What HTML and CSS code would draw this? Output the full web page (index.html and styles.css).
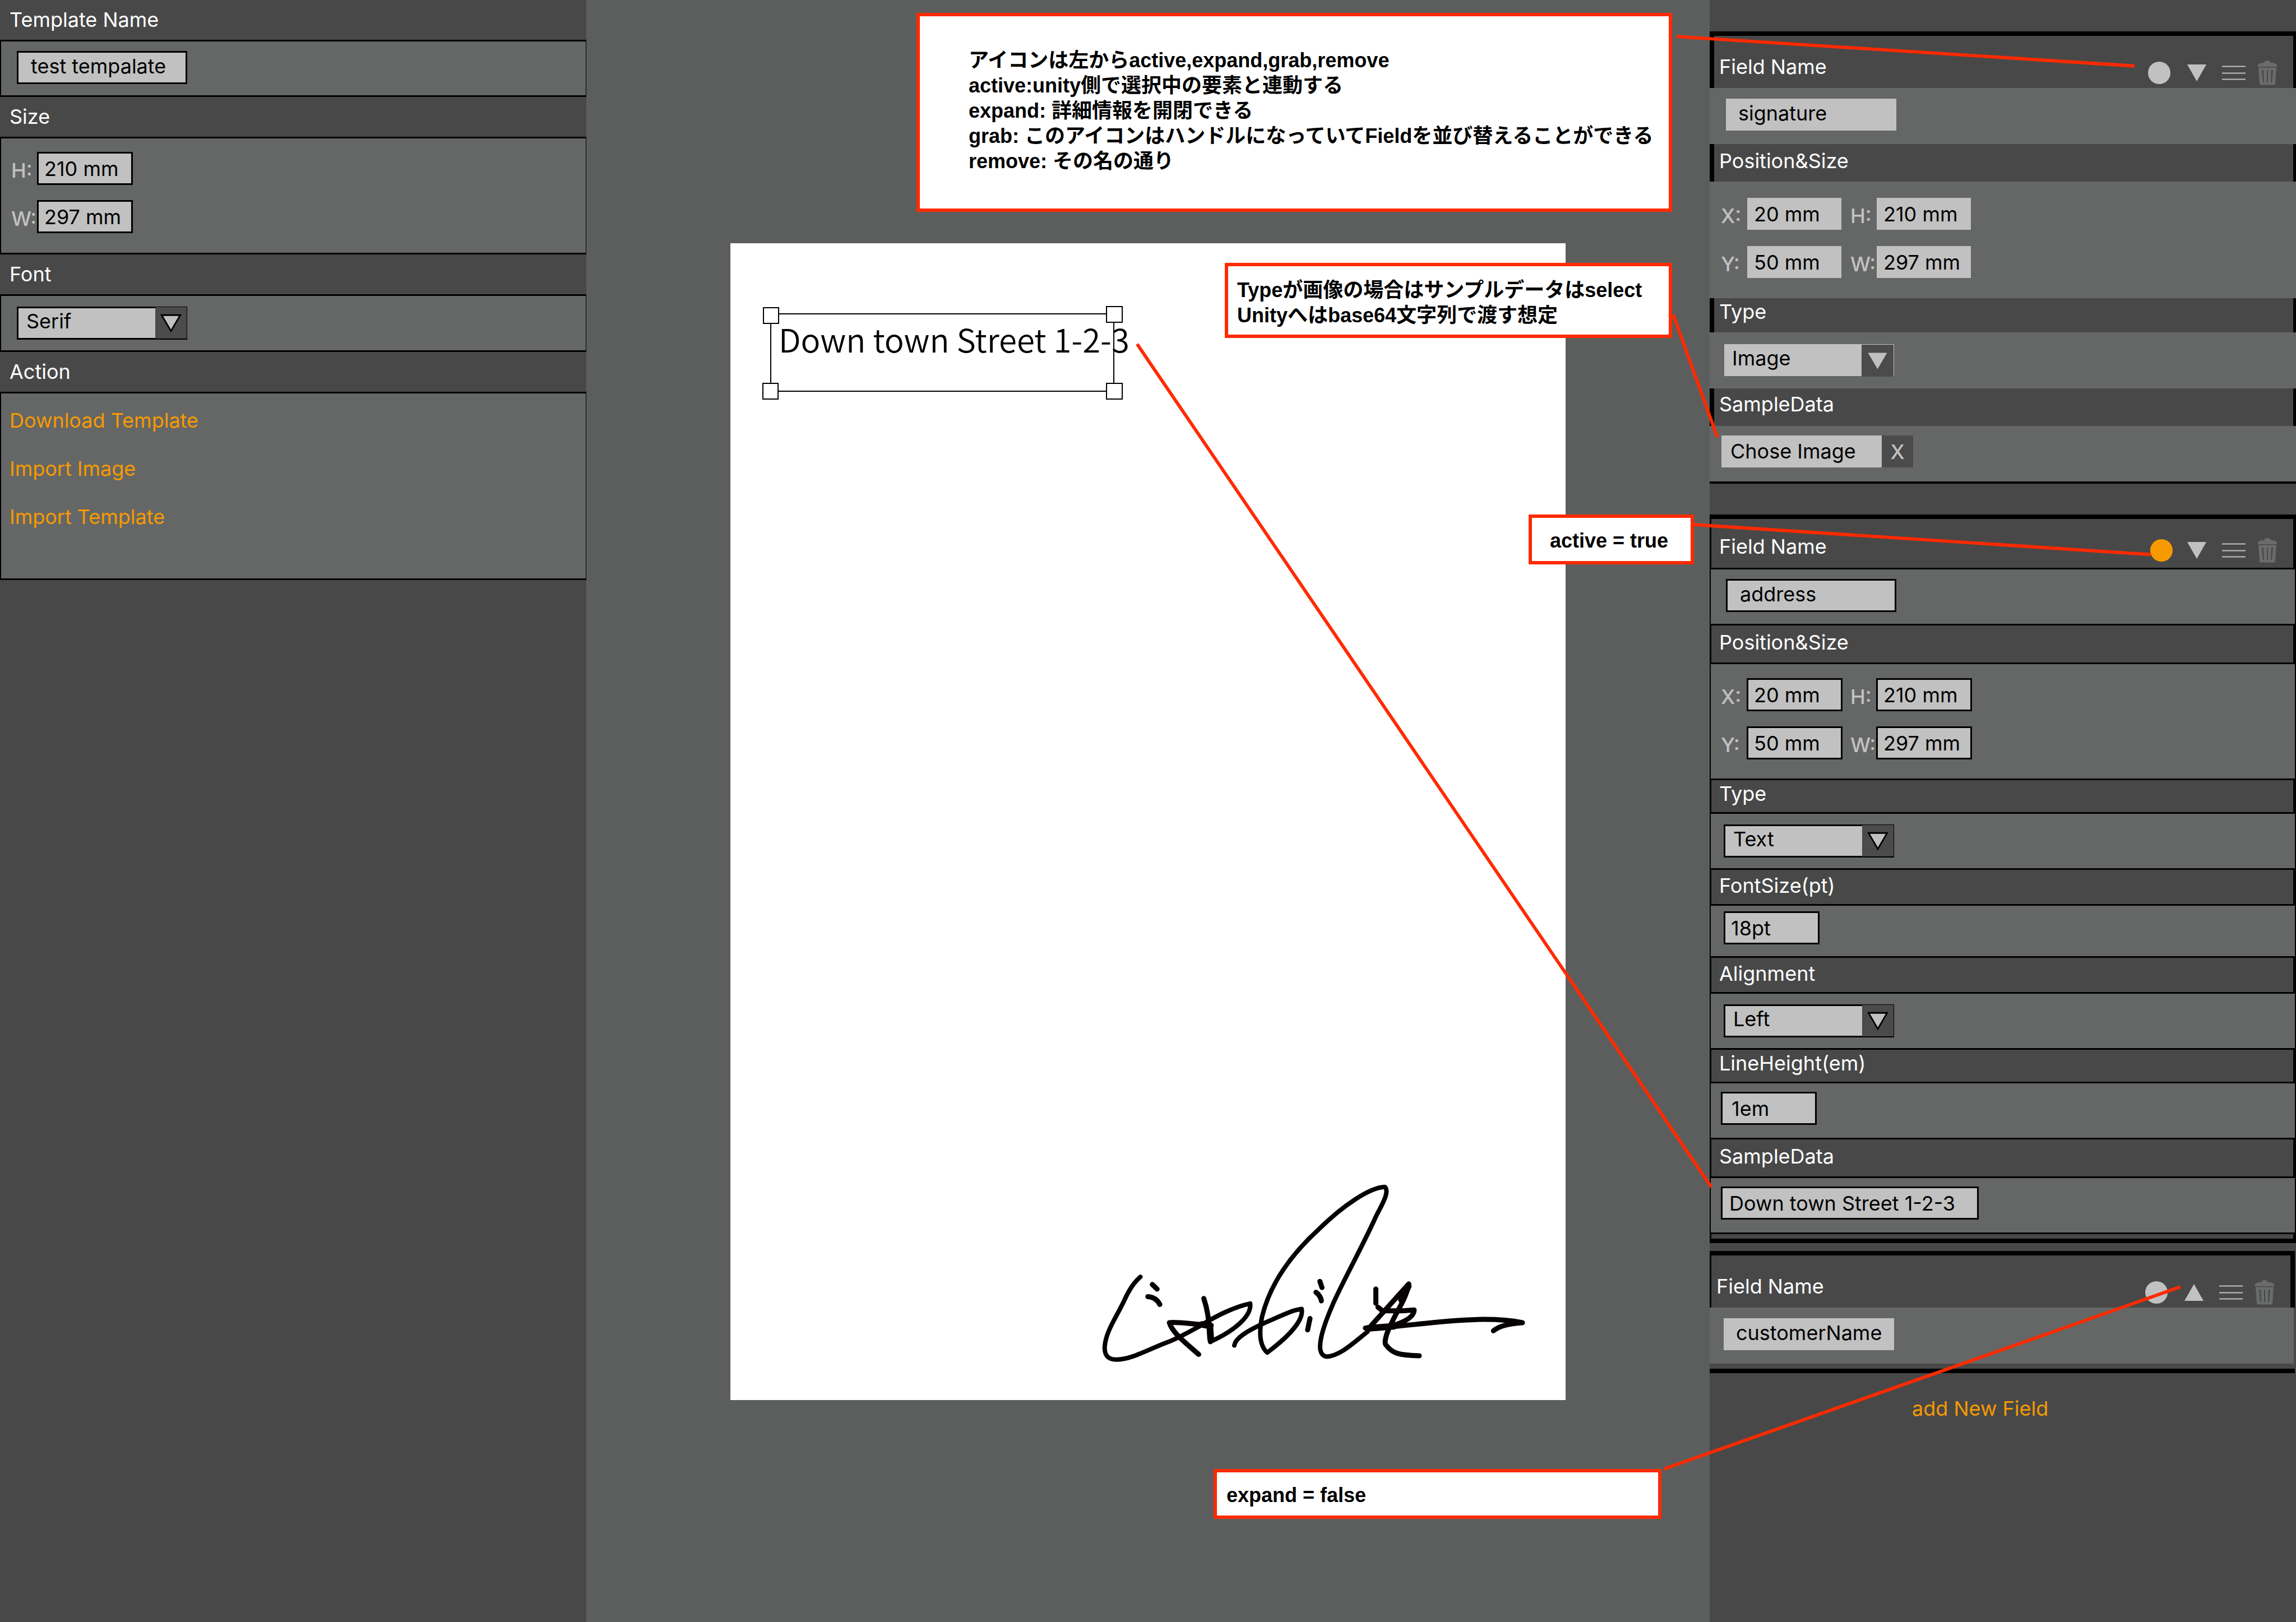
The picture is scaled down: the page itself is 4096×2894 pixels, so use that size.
FILE: index.html
```html
<!DOCTYPE html>
<html lang="ja">
<head>
<meta charset="utf-8">
<title>Template Editor</title>
<link rel="stylesheet" href="styles.css">
</head>
<body>
<svg class="symbols" aria-hidden="true">
  <symbol id="icon-dot" viewBox="0 0 64 44"><circle cx="30" cy="22" r="20"/></symbol>
  <symbol id="icon-dot-active" viewBox="0 0 64 44"><circle cx="34" cy="22" r="20"/></symbol>
  <symbol id="icon-down" viewBox="0 0 64 44"><path d="M16 7H50L33 37Z"/></symbol>
  <symbol id="icon-up" viewBox="0 0 64 44"><path d="M16 37H50L33 7Z"/></symbol>
  <symbol id="icon-grab" viewBox="0 0 64 44"><path d="M14 9.500H56V11.500H14ZM14 21.500H56V23.500H14ZM14 32.500H56V34.500H14Z"/></symbol>
  <symbol id="icon-trash" viewBox="0 0 64 44"><path fill-rule="evenodd" d="M14 11V8Q15 5 21 4H25Q26 0 31 0T37 4H41Q47 5 48 8V11ZM15 12.500H47L45 41Q45 43.500 42 43.500H20Q17 43.500 17 41ZM21 17L23 39H25L24 17ZM30 17V39H32V17ZM38 17L37 39H39L41 17Z"/></symbol>
  <symbol id="icon-caret" viewBox="0 0 57 59"><path d="M11 15H46L28.500 45Z"/></symbol>
</svg>

<main class="editor">
  <aside class="sidebar">
    <section class="group">
      <h2 class="group-title"><label for="template-name">Template Name</label></h2>
      <div class="group-body name-body">
        <input class="field field-name" id="template-name" type="text" value="test tempalate">
      </div>
    </section>
    <section class="group">
      <h2 class="group-title">Size</h2>
      <div class="group-body measure-body">
        <div class="measures">
          <label for="page-h">H:</label><input class="field measure" id="page-h" type="text" value="210 mm">
          <label for="page-w">W:</label><input class="field measure" id="page-w" type="text" value="297 mm">
        </div>
      </div>
    </section>
    <section class="group">
      <h2 class="group-title"><label for="font">Font</label></h2>
      <div class="group-body select-body">
        <div class="select"><select class="field" id="font"><option>Serif</option></select><svg class="caret"><use href="#icon-caret"/></svg></div>
      </div>
    </section>
    <section class="group">
      <h2 class="group-title">Action</h2>
      <div class="group-body actions">
        <a href="#download">Download Template</a>
        <a href="#import-image">Import Image</a>
        <a href="#import-template">Import Template</a>
      </div>
    </section>
  </aside>

  <section class="stage">
    <div class="paper">
      <p class="paper-text">Down town Street 1-2-3</p>
      <svg class="selection" viewBox="0 0 644 168" aria-hidden="true">
        <path d="M15 14H627V152H15Z"/>
        <path class="handle" d="M2 3H29V31H2ZM614 1H642V29H614ZM1 138H28V166H1ZM614 138H642V166H614Z"/>
      </svg>
      <svg class="signature" viewBox="0 0 1568 1200" preserveAspectRatio="none" role="img" aria-label="signature">
        <path d="M203 633C180 665 165 705 150 760C125 850 88 930 84 1015C82 1065 95 1090 125 1088C170 1088 220 1040 290 995C330 970 350 950 400 905"/>
        <path d="M400 905C450 855 510 800 570 780C575 840 530 920 437 990"/>
        <path d="M517 1010C520 970 560 930 620 885C670 850 710 815 742 810C750 870 700 960 627 1050C600 1010 600 930 610 850C640 650 720 490 800 370C880 240 970 140 1020 138C1040 170 1000 260 985 320C940 480 880 660 850 770C815 900 780 1060 825 1072C870 1070 920 990 962 935"/>
        <path class="bold" d="M300 885C330 880 370 892 440 900M300 885C310 940 350 990 398 1060M415 752C425 800 432 850 437 990M975 900L1100 672C1090 760 1060 820 1045 880C1025 940 1015 1000 1025 1010C1045 1055 1070 1065 1135 1067"/>
        <path class="bold" d="M955 915C1060 915 1200 870 1350 867C1400 867 1450 875 1480 885C1430 890 1400 905 1383 930M990 700V778M997 800L1012 820H1080L1118 815C1118 850 1090 880 1040 905"/>
        <path class="bold" d="M243 675L259 700M228 742C250 745 262 765 268 785M770 862L762 925M803 658L810 692M790 718C800 730 806 745 808 765"/>
        <path class="heavy" d="M410 895L436 903M435 900L438 975M965 916L1050 905M1076 760L1098 685"/>
      </svg>
    </div>
  </section>

  <aside class="sidebar fields">
    <article class="card card-plain">
      <section>
        <header class="card-head">
          <h2><label for="f1-name">Field Name</label></h2>
          <div class="tools">
            <button type="button" aria-label="active"><svg><use href="#icon-dot"/></svg></button>
            <button type="button" aria-label="expand"><svg><use href="#icon-down"/></svg></button>
            <button type="button" aria-label="grab"><svg><use href="#icon-grab"/></svg></button>
            <button type="button" aria-label="remove" class="remove"><svg><use href="#icon-trash"/></svg></button>
          </div>
        </header>
        <div class="prop-body name-body"><input class="field field-name" id="f1-name" type="text" value="signature"></div>
      </section>
      <section>
        <h3 class="prop-title roomy">Position&amp;Size</h3>
        <div class="prop-body measure-body">
          <div class="measures pairs">
            <label for="f1-x">X:</label><input class="field measure" id="f1-x" type="text" value="20 mm">
            <label for="f1-h">H:</label><input class="field measure" id="f1-h" type="text" value="210 mm">
            <label for="f1-y">Y:</label><input class="field measure" id="f1-y" type="text" value="50 mm">
            <label for="f1-w">W:</label><input class="field measure" id="f1-w" type="text" value="297 mm">
          </div>
        </div>
      </section>
      <section>
        <h3 class="prop-title tight"><label for="f1-type">Type</label></h3>
        <div class="prop-body select-body">
          <div class="select"><select class="field" id="f1-type"><option>Image</option></select><svg class="caret"><use href="#icon-caret"/></svg></div>
        </div>
      </section>
      <section>
        <h3 class="prop-title">SampleData</h3>
        <div class="prop-body sample-body">
          <button type="button" class="field choose">Chose Image</button><button type="button" class="clear">X</button>
        </div>
      </section>
    </article>

    <article class="card card-active">
      <section>
        <header class="card-head">
          <h2><label for="f2-name">Field Name</label></h2>
          <div class="tools">
            <button type="button" aria-label="active" class="is-active"><svg><use href="#icon-dot-active"/></svg></button>
            <button type="button" aria-label="expand"><svg><use href="#icon-down"/></svg></button>
            <button type="button" aria-label="grab"><svg><use href="#icon-grab"/></svg></button>
            <button type="button" aria-label="remove" class="remove"><svg><use href="#icon-trash"/></svg></button>
          </div>
        </header>
        <div class="prop-body name-body"><input class="field field-name" id="f2-name" type="text" value="address"></div>
      </section>
      <section>
        <h3 class="prop-title roomy">Position&amp;Size</h3>
        <div class="prop-body measure-body">
          <div class="measures pairs">
            <label for="f2-x">X:</label><input class="field measure" id="f2-x" type="text" value="20 mm">
            <label for="f2-h">H:</label><input class="field measure" id="f2-h" type="text" value="210 mm">
            <label for="f2-y">Y:</label><input class="field measure" id="f2-y" type="text" value="50 mm">
            <label for="f2-w">W:</label><input class="field measure" id="f2-w" type="text" value="297 mm">
          </div>
        </div>
      </section>
      <section>
        <h3 class="prop-title tight"><label for="f2-type">Type</label></h3>
        <div class="prop-body select-body">
          <div class="select"><select class="field" id="f2-type"><option>Text</option></select><svg class="caret"><use href="#icon-caret"/></svg></div>
        </div>
      </section>
      <section>
        <h3 class="prop-title"><label for="f2-size">FontSize(pt)</label></h3>
        <div class="prop-body size-body"><input class="field measure" id="f2-size" type="text" value="18pt"></div>
      </section>
      <section>
        <h3 class="prop-title"><label for="f2-align">Alignment</label></h3>
        <div class="prop-body select-body">
          <div class="select"><select class="field" id="f2-align"><option>Left</option></select><svg class="caret"><use href="#icon-caret"/></svg></div>
        </div>
      </section>
      <section>
        <h3 class="prop-title tight"><label for="f2-line">LineHeight(em)</label></h3>
        <div class="prop-body sample-body"><input class="field measure measure-line" id="f2-line" type="text" value="1em"></div>
      </section>
      <section>
        <h3 class="prop-title roomy"><label for="f2-sample">SampleData</label></h3>
        <div class="prop-body sample-body"><input class="field sample" id="f2-sample" type="text" value="Down town Street 1-2-3"></div>
      </section>
    </article>

    <article class="card card-plain card-closed">
      <section>
        <header class="card-head">
          <h2><label for="f3-name">Field Name</label></h2>
          <div class="tools">
            <button type="button" aria-label="active"><svg><use href="#icon-dot"/></svg></button>
            <button type="button" aria-label="expand"><svg><use href="#icon-up"/></svg></button>
            <button type="button" aria-label="grab"><svg><use href="#icon-grab"/></svg></button>
            <button type="button" aria-label="remove" class="remove"><svg><use href="#icon-trash"/></svg></button>
          </div>
        </header>
        <div class="prop-body name-body"><input class="field field-name" id="f3-name" type="text" value="customerName"></div>
      </section>
    </article>

    <button type="button" class="add">add New Field</button>
  </aside>

  <div class="notes">
    <p class="note note-icons">アイコンは左からactive,expand,grab,remove<br>active:unity側で選択中の要素と連動する<br>expand: 詳細情報を開閉できる<br>grab: このアイコンはハンドルになっていてFieldを並び替えることができる<br>remove: その名の通り</p>
    <p class="note note-type">Typeが画像の場合はサンプルデータはselect<br>Unityへはbase64文字列で渡す想定</p>
    <p class="note note-active">active = true</p>
    <p class="note note-expand">expand = false</p>
    <svg class="leaders" viewBox="0 0 4210 2975" aria-hidden="true">
      <path d="M3074 67L3914 121M3068 577L3149 802M3104 962L3944 1017M2085 631L3138 2177M3051 2694L3998 2360"/>
    </svg>
  </div>
</main>
</body>
</html>
```
FILE: styles.css
```css
:root {
  --chrome: #484848;
  --panel: #656766;
  --stage: #5c5e5d;
  --control: #c1c1c1;
  --control-dark: #4b4b4b;
  --accent: #f79a00;
  --note: #ff2a00;
}

* {
  box-sizing: border-box;
}

body {
  margin: 0;
  color: #fff;
  background: var(--stage);
  font: 400 36px/40px Inter, "Liberation Sans", "Noto Sans CJK JP", sans-serif;
}

h2,
h3,
p {
  margin: 0;
  font: inherit;
}

button {
  padding: 0;
  border: 0;
  background: none;
  color: inherit;
  font: inherit;
}

.symbols {
  position: absolute;
  width: 0;
  height: 0;
}

.editor {
  position: relative;
  display: grid;
  grid-template-columns: 1046px 1fr 1046px;
  min-height: 100vh;
}

.sidebar {
  background: var(--chrome);
}

/* Template settings */

.group-title {
  min-height: 71px;
  padding: 15px 17px 0;
}

.group-body {
  border: solid #000;
  border-width: 3px 1px 3px 2px;
  background: var(--panel);
}

.actions {
  display: flex;
  flex-direction: column;
  align-items: flex-start;
  padding: 5px 15px 67px;
}

.actions a {
  color: var(--accent);
  line-height: 86px;
  text-decoration: none;
}

/* Controls */

.field {
  display: block;
  margin: 0;
  padding: 0 14px 6px;
  border: 3px solid #000;
  border-radius: 0;
  background: var(--control);
  color: #000;
  font: inherit;
  line-height: 47px;
  height: 59px;
}

.field-name {
  width: 304px;
  padding-left: 22px;
}

.measure {
  width: 171px;
  padding: 3px 0 3px 10px;
}

.measure-line {
  padding-left: 16px;
}

.sample {
  width: 460px;
  padding: 3px 12px;
}

.measures {
  display: grid;
  grid-template-columns: 46px 171px;
  row-gap: 27px;
}

.pairs {
  grid-template-columns: 46px 185px 46px 171px;
}

.measures label {
  padding-top: 13px;
  color: var(--control);
  font-weight: 500;
}

.select {
  position: relative;
  width: 304px;
}

.select select {
  width: 100%;
  appearance: none;
}

.caret {
  position: absolute;
  top: 0;
  right: 0;
  width: 57px;
  height: 59px;
  border: solid #000;
  border-width: 1px 1px 2px 0;
  background: var(--control-dark);
  fill: var(--control);
  stroke: #000;
  stroke-width: 3px;
  pointer-events: none;
}

.name-body {
  padding: 17px 28px 20px;
}

.measure-body {
  padding: 24px 20px 35px 18px;
}

.select-body {
  padding: 19px 28px;
}

/* Stage */

.stage {
  padding: 434px 0 396px;
}

.paper {
  position: relative;
  width: 1490px;
  height: 2064px;
  margin: 0 auto;
  background: #fff;
}

.paper-text {
  position: absolute;
  left: 86px;
  top: 130px;
  color: #000;
  font: 350 58px/80px "Noto Sans CJK JP", sans-serif;
  white-space: nowrap;
}

.selection {
  position: absolute;
  left: 57px;
  top: 112px;
  width: 644px;
  height: 168px;
  fill: none;
  stroke: #000;
  stroke-width: 2px;
}

.selection .handle {
  fill: #fff;
}

.signature {
  position: absolute;
  left: 623px;
  top: 1639px;
  width: 837px;
  height: 389px;
  fill: none;
  stroke: #060203;
  stroke-linecap: round;
  stroke-linejoin: round;
}

.signature path {
  stroke-width: 8px;
  vector-effect: non-scaling-stroke;
}

.signature .bold {
  stroke-width: 9px;
}

.signature .heavy {
  stroke-width: 12px;
}

/* Field cards */

.fields {
  padding-top: 56px;
}

.card {
  border-top: 8px solid #000;
}

.card-head {
  display: flex;
  justify-content: space-between;
  align-items: flex-end;
  min-height: 93px;
  padding: 0 13px 0 9px;
  border: solid #000;
  border-width: 0 5px 0 8px;
}

.card-head h2 {
  padding-bottom: 18px;
}

.tools {
  display: flex;
  padding-bottom: 5px;
}

.tools button {
  height: 44px;
  color: var(--control);
}

.tools .is-active {
  color: var(--accent);
}

.tools .remove {
  color: #6a6c6b;
}

.tools svg {
  display: block;
  width: 64px;
  height: 44px;
  fill: currentColor;
}

.prop-title {
  min-height: 67px;
  padding: 8px 9px 0;
  border: solid #000;
  border-width: 0 5px 0 8px;
}

.prop-title.tight {
  min-height: 61px;
  padding-top: 4px;
}

.prop-title.roomy {
  padding-top: 10px;
}

.prop-body {
  background: var(--panel);
}

.prop-body.select-body {
  padding-left: 25px;
}

.prop-body.measure-body {
  padding-top: 25px;
  padding-bottom: 34px;
  padding-left: 20px;
}

.sample-body {
  display: flex;
  padding: 15px 20px 23px;
}

.size-body {
  padding: 10px 25px 21px;
}

/* Cards that are not selected carry no outlines */

.card-plain .field {
  height: 57px;
  border: 0;
  margin: 1px;
  padding-top: 2px;
  padding-bottom: 8px;
}

.card-plain .measure,
.card-plain .choose {
  padding-top: 5px;
  padding-bottom: 5px;
}

.card-plain .prop-body {
  padding-top: 18px;
  padding-bottom: 23px;
}

.card-plain .measure-body {
  padding-top: 28px;
  padding-bottom: 35px;
}

.card-plain .select-body {
  padding-top: 20px;
  padding-bottom: 21px;
}

.card-plain .measure {
  width: 168px;
  padding-left: 12px;
}

.card-plain .select {
  width: 303px;
}

.card-plain .caret {
  top: 1px;
  height: 57px;
  border: 0;
  stroke: none;
}

.card-plain .prop-body.sample-body {
  padding-top: 16px;
  padding-bottom: 24px;
  border-bottom: 4px solid #000;
}

.choose {
  width: 286px;
  text-align: left;
}

.card-plain .choose {
  margin-right: 0;
  padding-left: 16px;
}

.clear {
  width: 56px;
  height: 57px;
  margin: 1px 0;
  background: var(--control-dark);
  color: var(--control);
  font-weight: 500;
}

.card-active {
  margin: 55px 0 14px;
  padding-bottom: 8px;
  border: solid #000;
  border-width: 8px 5px 8px 3px;
}

.card-active .card-head {
  min-height: 87px;
  padding-left: 14px;
  border: 0;
}

.card-active .tools {
  padding-bottom: 9px;
}

.card-active .prop-title {
  min-height: 61px;
  padding-left: 14px;
  border: 0;
}

.card-active .tight {
  min-height: 57px;
}

.card-active .roomy {
  min-height: 66px;
}

.card-active .prop-body {
  margin: 0 -3px 0 -1px;
  padding-left: 18px;
  border: solid #000;
  border-width: 3px 0;
}

.card-active .name-body {
  padding: 17px 27px 21px;
}

.card-active .select-body,
.card-active .size-body {
  padding-left: 23px;
}

.card-closed {
  margin-right: 2px;
  border-bottom: 8px solid #000;
}

.card-closed .card-head {
  border-width: 0 8px 0 3px;
}

.card-closed .prop-body {
  margin-right: 2px;
  margin-bottom: 9px;
  padding-left: 24px;
}

.add {
  display: block;
  margin: 38px auto 0 361px;
  color: var(--accent);
  line-height: 50px;
}

/* Review notes laid over the screen */

.notes {
  position: absolute;
  inset: 0;
  pointer-events: none;
}

.note {
  position: absolute;
  border: 6px solid var(--note);
  background: #fff;
  color: #000;
  font: 700 36px/45px "Liberation Sans", "Noto Sans CJK JP", sans-serif;
  white-space: nowrap;
}

.note-icons {
  left: 1635px;
  top: 23px;
  width: 1348px;
  padding: 56px 0 62px 87px;
}

.note-type {
  left: 2185px;
  top: 469px;
  width: 798px;
  padding: 20px 16px 12px;
}

.note-active {
  left: 2727px;
  top: 918px;
  width: 295px;
  padding: 18px 32px 14px;
}

.note-expand {
  left: 2165px;
  top: 2621px;
  width: 799px;
  padding: 18px 17px 14px;
}

.leaders {
  position: absolute;
  left: 0;
  top: 0;
  width: 100%;
  fill: none;
  stroke: var(--note);
  stroke-width: 6px;
}
```
